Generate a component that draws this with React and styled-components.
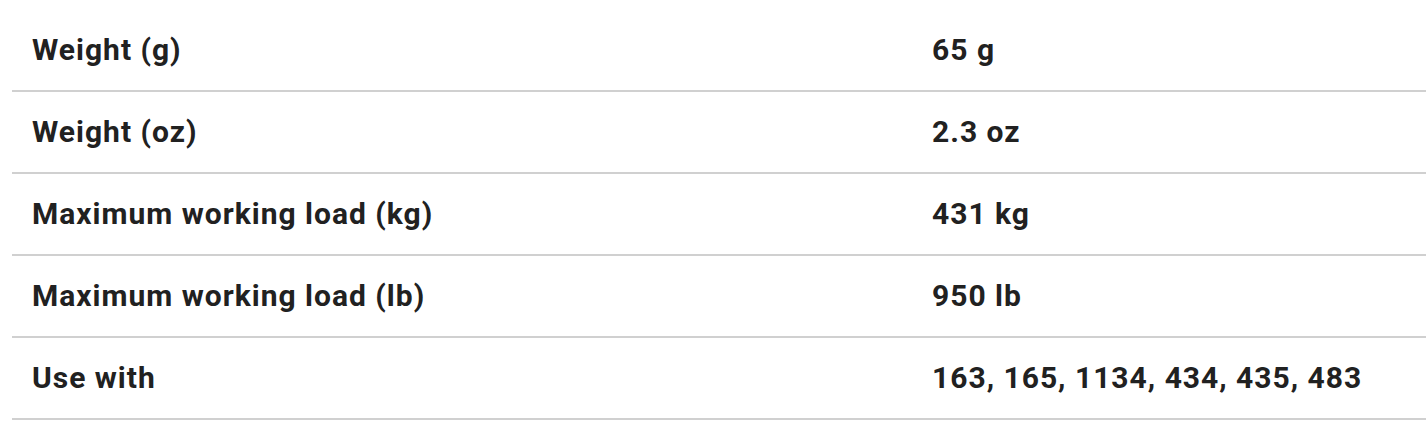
import React from 'react'
import styled, { createGlobalStyle } from 'styled-components'

const specs = [
    ['Weight (g)', '65 g'],
    ['Weight (oz)', '2.3 oz'],
    ['Maximum working load (kg)', '431 kg'],
    ['Maximum working load (lb)', '950 lb'],
    ['Use with', '163, 165, 1134, 434, 435, 483'],
]

const GlobalStyle = createGlobalStyle`
    body{
        margin:0;
        background:#fff;
        font-family: Roboto, "Liberation Sans", sans-serif;
    }
`;

const App = () => {
    return (
        <Wrapper>
            <GlobalStyle />
            <SpecTable>
                {specs.map(([label, value], index) => (
                    <Row key={index}>
                        <Cell>{label}</Cell>
                        <Cell>{value}</Cell>
                    </Row>
                ))}
            </SpecTable>
        </Wrapper>
    )
}

export default App

const Wrapper = styled.div`
    padding:10px 0 0 12px;
`;
const SpecTable = styled.div`
    display:flex;
    flex-direction:column;
`;
const Row = styled.div`
    display:grid;
    grid-template-columns:900px 1fr;
    align-items:center;
    height:80px;
    border-bottom:2px solid #d0d0d0;
`;
const Cell = styled.div`
    padding:0 20px;
    font-size:30px;
    font-weight:700;
    letter-spacing:1px;
    color:#212121;
    line-height:1;
`;
